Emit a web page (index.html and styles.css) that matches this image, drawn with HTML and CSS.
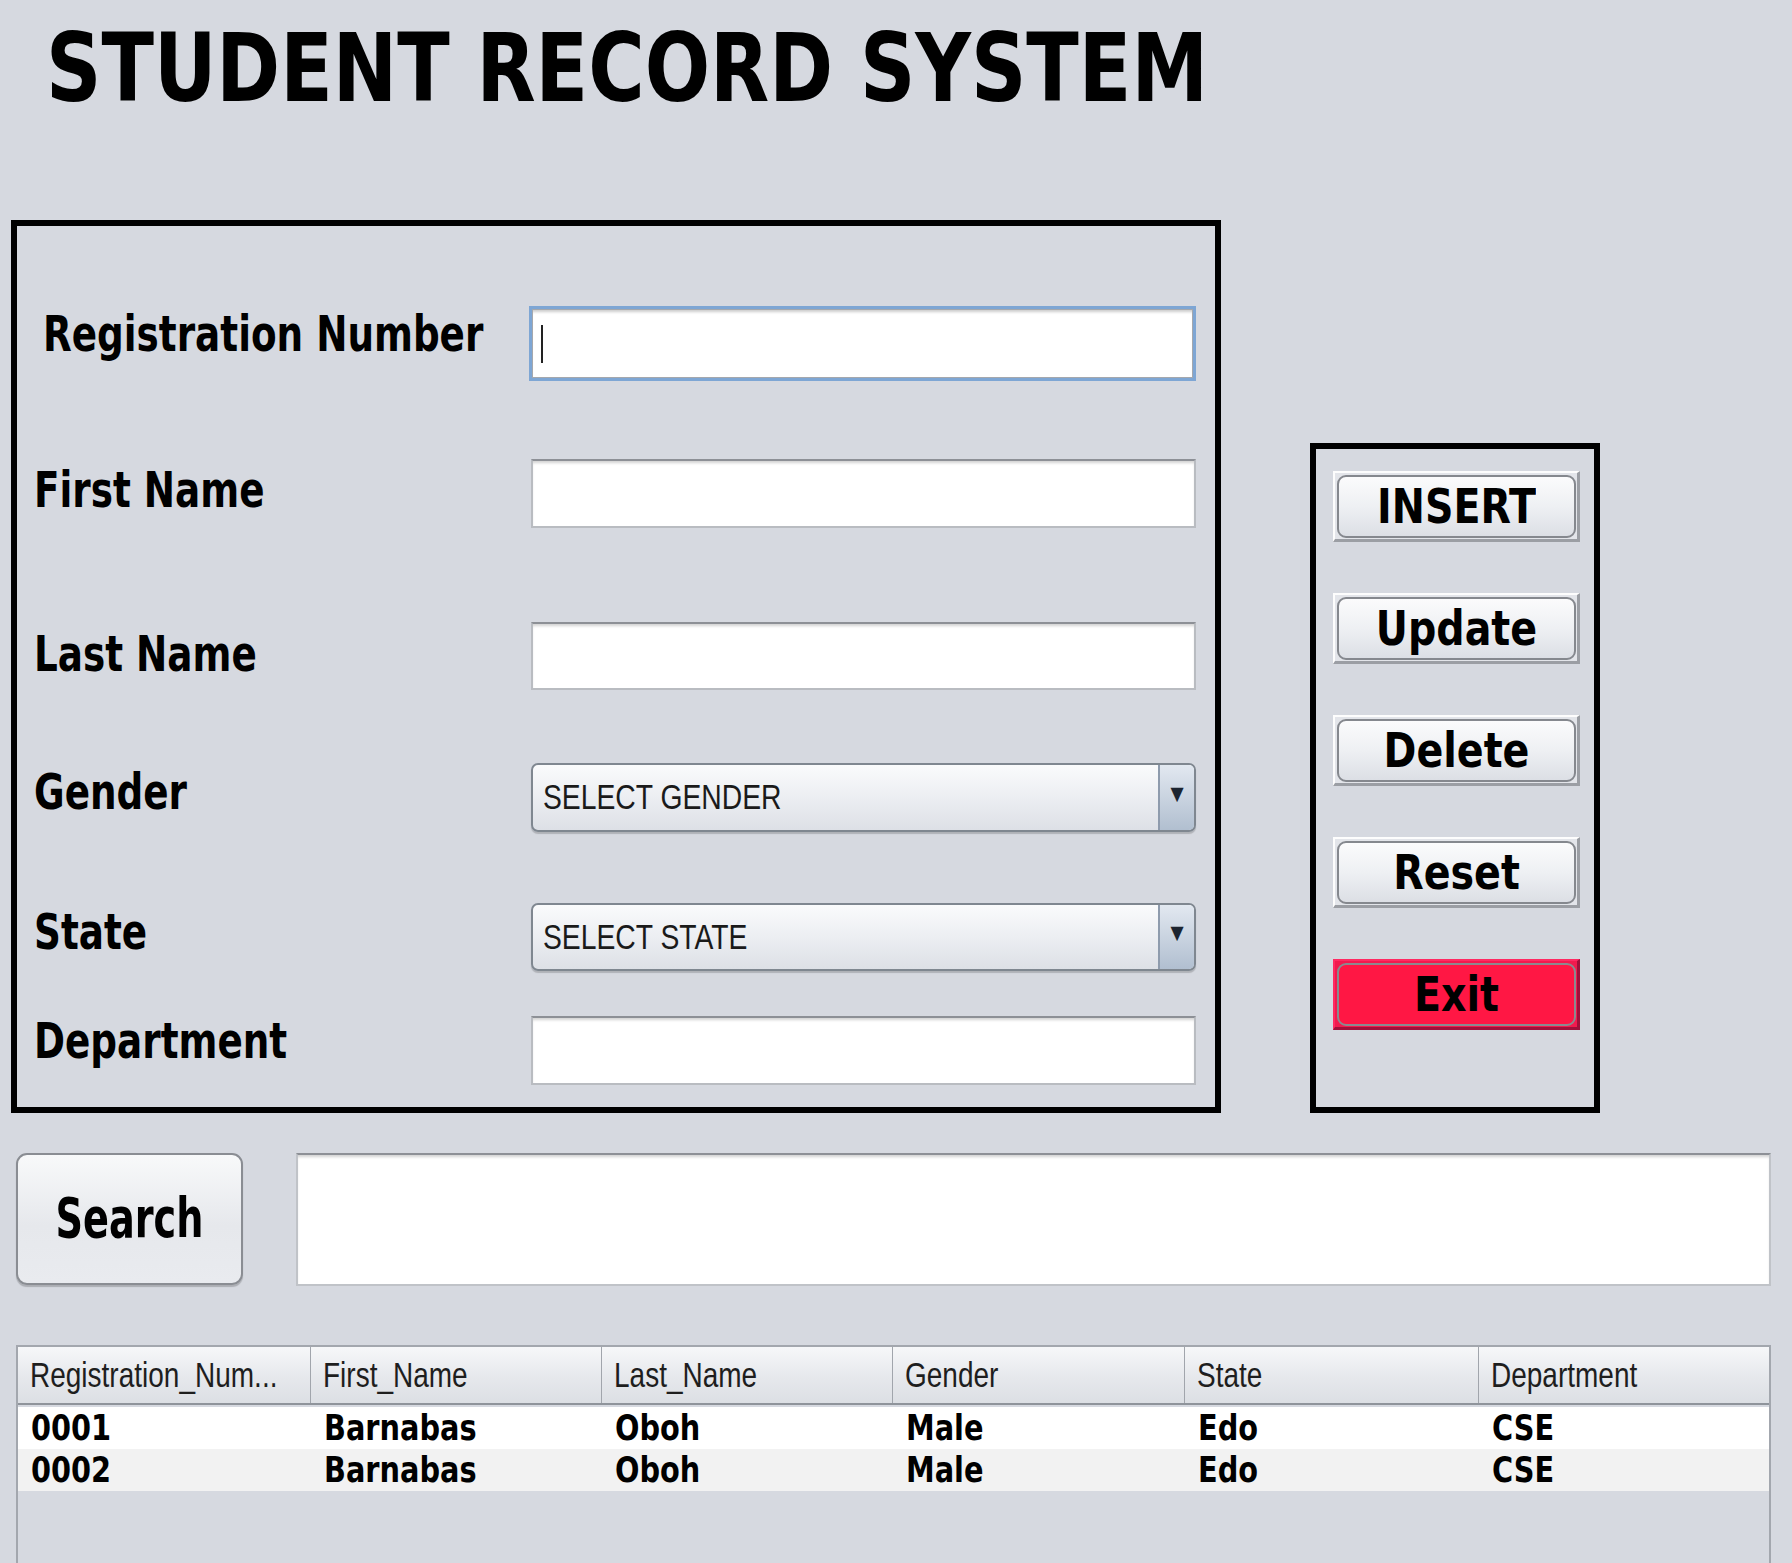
FILE: index.html
```html
<!DOCTYPE html>
<html>
<head>
<meta charset="utf-8">
<title>Student Record System</title>
<link rel="stylesheet" href="styles.css">
</head>
<body>
<div class="app">
  <h1 class="title"><span class="title-text">STUDENT RECORD SYSTEM</span></h1>

  <div class="main-row">
    <div class="form-box">
      <div class="row row-reg">
        <label class="lbl lbl-reg"><span class="lbl-text">Registration Number</span></label>
        <div class="field field-reg field-focus"><span class="caret"></span></div>
      </div>
      <div class="row row-first">
        <label class="lbl lbl-first"><span class="lbl-text">First Name</span></label>
        <div class="field"></div>
      </div>
      <div class="row row-last">
        <label class="lbl lbl-last"><span class="lbl-text">Last Name</span></label>
        <div class="field"></div>
      </div>
      <div class="row row-gender">
        <label class="lbl lbl-gender"><span class="lbl-text">Gender</span></label>
        <div class="combo"><span class="combo-label"><span class="combo-text">SELECT GENDER</span></span><span class="combo-arrow">▼</span></div>
      </div>
      <div class="row row-state">
        <label class="lbl lbl-state"><span class="lbl-text">State</span></label>
        <div class="combo"><span class="combo-label"><span class="combo-text">SELECT STATE</span></span><span class="combo-arrow">▼</span></div>
      </div>
      <div class="row row-dept">
        <label class="lbl lbl-dept"><span class="lbl-text">Department</span></label>
        <div class="field"></div>
      </div>
    </div>

    <div class="btn-box">
      <div class="btn-frame"><div class="btn"><span class="btn-text">INSERT</span></div></div>
      <div class="btn-frame"><div class="btn"><span class="btn-text">Update</span></div></div>
      <div class="btn-frame"><div class="btn"><span class="btn-text">Delete</span></div></div>
      <div class="btn-frame"><div class="btn"><span class="btn-text">Reset</span></div></div>
      <div class="btn-frame btn-frame-exit"><div class="btn btn-exit"><span class="btn-text">Exit</span></div></div>
    </div>
  </div>

  <div class="search-row">
    <div class="search-btn"><span class="search-text">Search</span></div>
    <div class="search-field"></div>
  </div>

  <div class="table">
    <div class="thead">
      <div class="th"><span class="th-text">Registration_Num...</span></div>
      <div class="th"><span class="th-text">First_Name</span></div>
      <div class="th"><span class="th-text">Last_Name</span></div>
      <div class="th"><span class="th-text">Gender</span></div>
      <div class="th"><span class="th-text">State</span></div>
      <div class="th th-last"><span class="th-text">Department</span></div>
    </div>
    <div class="tr tr-odd">
      <div class="td"><span class="td-text">0001</span></div>
      <div class="td"><span class="td-text">Barnabas</span></div>
      <div class="td"><span class="td-text">Oboh</span></div>
      <div class="td"><span class="td-text">Male</span></div>
      <div class="td"><span class="td-text">Edo</span></div>
      <div class="td"><span class="td-text">CSE</span></div>
    </div>
    <div class="tr tr-even">
      <div class="td"><span class="td-text">0002</span></div>
      <div class="td"><span class="td-text">Barnabas</span></div>
      <div class="td"><span class="td-text">Oboh</span></div>
      <div class="td"><span class="td-text">Male</span></div>
      <div class="td"><span class="td-text">Edo</span></div>
      <div class="td"><span class="td-text">CSE</span></div>
    </div>
  </div>
</div>
</body>
</html>
```

FILE: styles.css
```css
html, body {
  margin: 0;
  padding: 0;
  background: #d6d9e0;
  overflow: hidden;
}

.app {
  width: 1792px;
  height: 1563px;
  font-family: "DejaVu Sans Condensed", "DejaVu Sans", sans-serif;
  font-stretch: condensed;
  color: #000;
}

/* ---------- Title ---------- */
.title {
  margin: 0;
  padding: 22px 0 0 46px;
  height: 93px;
  font-size: 85.5px;
  line-height: 93px;
  font-weight: 700;
  white-space: nowrap;
}
.title-text {
  display: inline-block;
  transform: scaleY(1.1);
}

/* ---------- Main row ---------- */
.main-row {
  display: flex;
  align-items: flex-end;
  gap: 89px;
  margin-top: 105px;
  padding-left: 11px;
}

.form-box {
  box-sizing: border-box;
  width: 1210px;
  height: 893px;
  border: 6px solid #000;
  padding: 0 19px 0 17px;
  display: flex;
  flex-direction: column;
}

.row {
  display: flex;
  align-items: center;
  height: 69px;
}
.row-reg { margin-top: 80px; height: 75px; }
.row-first { margin-top: 78px; }
.row-last { margin-top: 94px; height: 68px; }
.row-gender { margin-top: 73px; }
.row-state { margin-top: 71px; height: 68px; }
.row-dept { margin-top: 45px; }

.lbl {
  flex: 0 0 497px;
  font-size: 41.5px;
  line-height: 41px;
  font-weight: 700;
  white-space: nowrap;
  box-sizing: border-box;
}
.lbl-text {
  display: inline-block;
  transform: scaleY(1.2);
}
.lbl-reg { padding-left: 9px; padding-bottom: 20px; }
.lbl-first { padding-bottom: 8px; }
.lbl-last { padding-bottom: 6px; }
.lbl-gender { padding-bottom: 12px; }
.lbl-state { padding-bottom: 12px; }
.lbl-dept { padding-bottom: 20px; }

.field {
  box-sizing: border-box;
  width: 665px;
  height: 100%;
  background: #fff;
  border: 2px solid #b9bcc1;
  border-top-color: #8d9096;
  box-shadow: inset 0 3px 3px -1px rgba(0,0,0,0.18);
  position: relative;
}
.field-reg {
  width: 669px;
  margin-left: -2px;
}
.field-focus {
  border: 3px solid #7ea6d4;
  box-shadow: inset 0 0 0 1px #a5a8ad, inset 0 4px 3px -1px rgba(0,0,0,0.2);
}
.caret {
  position: absolute;
  left: 9px;
  top: 16px;
  width: 2px;
  height: 38px;
  background: #222;
}

.combo {
  box-sizing: border-box;
  width: 665px;
  height: 100%;
  border: 2px solid #7f8790;
  border-radius: 7px;
  background: linear-gradient(#fafbfc 0%, #eceef2 50%, #dde0e6 100%);
  box-shadow: 0 2px 1px rgba(0,0,0,0.18);
  display: flex;
  align-items: center;
  overflow: hidden;
}
.combo-label {
  flex: 1;
  padding-left: 10px;
  white-space: nowrap;
}
.combo-text {
  display: inline-block;
  font-family: "Liberation Sans", Arial, sans-serif;
  font-size: 34.5px;
  color: #1a1a1a;
  transform: scaleX(0.82);
  transform-origin: left center;
}
.combo-arrow {
  width: 36px;
  height: 100%;
  border-left: 2px solid #8e9bad;
  background: linear-gradient(#e2e8f0, #b1bfd0);
  display: flex;
  align-items: center;
  justify-content: center;
  font-family: "DejaVu Sans", sans-serif;
  font-size: 19px;
  color: #1c2430;
  padding-bottom: 10px;
  box-sizing: border-box;
}

/* ---------- Button box ---------- */
.btn-box {
  box-sizing: border-box;
  width: 290px;
  height: 670px;
  border: 6px solid #000;
  padding: 22px 0 0 17px;
  display: flex;
  flex-direction: column;
  gap: 51px;
}
.btn-frame {
  box-sizing: border-box;
  width: 247px;
  height: 71px;
  border-top: 2px solid #fdfdfd;
  border-left: 2px solid #fdfdfd;
  border-right: 3px solid #9b9ea4;
  border-bottom: 3px solid #9b9ea4;
  background: #e3e5ea;
  padding: 2px 1px 1px 2px;
}
.btn {
  box-sizing: border-box;
  width: 100%;
  height: 100%;
  border: 2px solid #85888e;
  border-radius: 9px;
  background: linear-gradient(#fbfbfc 0%, #eef0f3 50%, #dcdfe5 100%);
  display: flex;
  align-items: center;
  justify-content: center;
  font-size: 44px;
  font-weight: 700;
  line-height: 1;
}
.btn-text {
  display: inline-block;
  transform: scaleY(1.1);
}
.btn-frame-exit {
  border-top-color: #ff2a62;
  border-left-color: #ff2a62;
  border-right-color: #a0103a;
  border-bottom-color: #a0103a;
  background: #f21a4e;
}
.btn-exit {
  background: #ff1744;
  border-color: #8a8a8f;
}

/* ---------- Search row ---------- */
.search-row {
  display: flex;
  align-items: flex-start;
  gap: 53px;
  margin-top: 40px;
  padding-left: 16px;
}
.search-btn {
  box-sizing: border-box;
  width: 227px;
  height: 132px;
  border: 2px solid #8a8d93;
  border-radius: 11px;
  background: linear-gradient(#f8f9fa 0%, #e6e8ec 55%, #e9ebef 100%);
  box-shadow: 0 2px 1px rgba(0,0,0,0.2);
  display: flex;
  align-items: center;
  justify-content: center;
  font-size: 42.5px;
  font-weight: 700;
  line-height: 1;
}
.search-text {
  display: inline-block;
  transform: scaleY(1.3);
}
.search-field {
  box-sizing: border-box;
  width: 1475px;
  height: 133px;
  background: #fff;
  border: 2px solid #c0c3c8;
  border-top-color: #8d9096;
  box-shadow: inset 0 3px 3px -1px rgba(0,0,0,0.18);
}

/* ---------- Table ---------- */
.table {
  box-sizing: border-box;
  margin: 59px 0 0 16px;
  width: 1755px;
  height: 240px;
  border: 2px solid #a3a7ae;
  border-bottom: none;
}
.thead, .tr {
  display: grid;
  grid-template-columns: 293px 291px 291px 292px 294px 1fr;
}
.thead {
  height: 58px;
  background: linear-gradient(#f6f7f9 0%, #e6e8ec 55%, #dcdfe4 100%);
  border-bottom: 2px solid #8f949b;
  box-sizing: border-box;
}
.th {
  border-right: 1px solid #a1a5ac;
  display: flex;
  align-items: center;
  padding-left: 12px;
  white-space: nowrap;
  min-width: 0;
}
.th-last { border-right: none; }
.th-text {
  display: inline-block;
  font-family: "Liberation Sans", Arial, sans-serif;
  font-size: 35px;
  color: #1e1e1e;
  transform: scaleX(0.8);
  transform-origin: left center;
}
.tr {
  height: 42px;
  align-items: center;
}
.tr-odd { background: #fff; margin-top: 2px; }
.tr-even { background: #f2f2f2; }
.td {
  padding-left: 13px;
  font-size: 32px;
  font-weight: 700;
  white-space: nowrap;
  line-height: 1;
}
.td-text {
  display: inline-block;
  transform: scaleY(1.1);
}
```
